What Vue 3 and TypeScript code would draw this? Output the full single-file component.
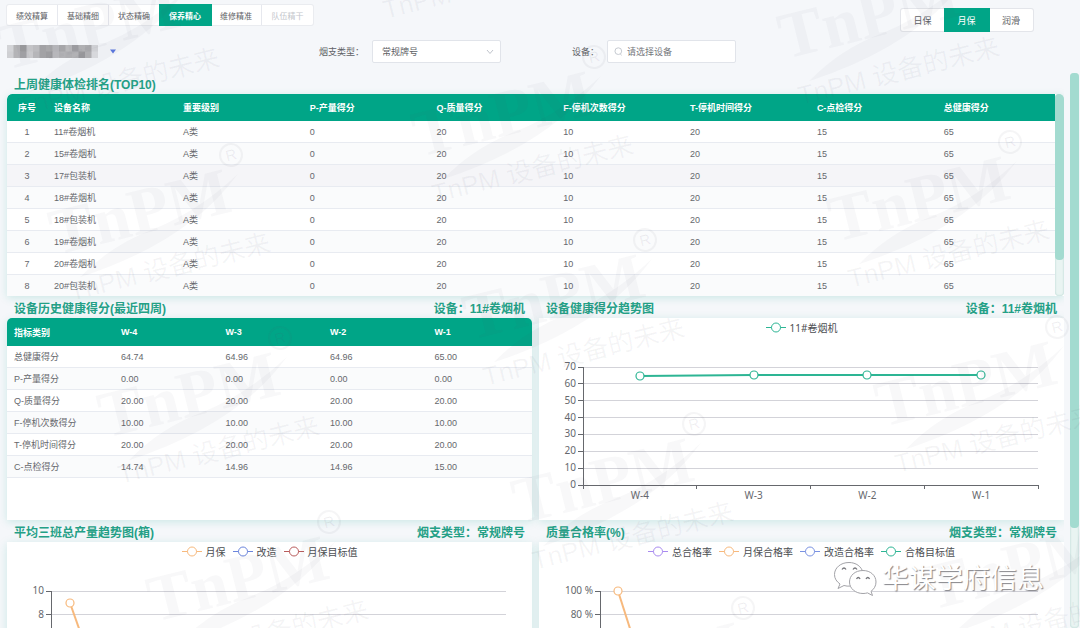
<script setup lang="ts">
import { ref } from 'vue'

interface Series { name: string; color: string }
interface Chart {
  axisX: number
  ticks: string[]
  categories: string[]
  legend: Series[]
  points: [number, number][]
  color: string
  last: number
}

const modules = ['绩效精算', '基础精细', '状态精确', '保养精心', '维修精准', '队伍精干']
const activeModule = ref('保养精心')
const periods = ['日保', '月保', '润滑']
const activePeriod = ref('月保')
const brand = ref('常规牌号')
const device = ref('')

const rankHead = ['序号', '设备名称', '重要级别', 'P-产量得分', 'Q-质量得分', 'F-停机次数得分', 'T-停机时间得分', 'C-点检得分', '总健康得分']
const rankNames = ['11#卷烟机', '15#卷烟机', '17#包装机', '18#卷烟机', '18#包装机', '19#卷烟机', '20#卷烟机', '20#包装机']
const rankRows = rankNames.map((name, i) => [String(i + 1), name, 'A类', '0', '20', '10', '20', '15', '65'])

const historyHead = ['指标类别', 'W-4', 'W-3', 'W-2', 'W-1']
const historyRows = [
  ['总健康得分', '64.74', '64.96', '64.96', '65.00'],
  ['P-产量得分', '0.00', '0.00', '0.00', '0.00'],
  ['Q-质量得分', '20.00', '20.00', '20.00', '20.00'],
  ['F-停机次数得分', '10.00', '10.00', '10.00', '10.00'],
  ['T-停机时间得分', '20.00', '20.00', '20.00', '20.00'],
  ['C-点检得分', '14.74', '14.96', '14.96', '15.00'],
]

const TOP = 49
const BOTTOM = 167
const RIGHT = 499

const health: Chart = {
  axisX: 44,
  ticks: ['70', '60', '50', '40', '30', '20', '10', '0'],
  categories: ['W-4', 'W-3', 'W-2', 'W-1'],
  legend: [{ name: '11#卷烟机', color: '#2db594' }],
  points: [[101, 58], [215, 57], [328, 57], [442, 57]],
  color: '#2db594',
  last: 4,
}
const output: Chart = {
  axisX: 44,
  ticks: ['10', '8', '6', '4', '2', '0'],
  categories: [],
  legend: [
    { name: '月保', color: '#f7b97d' },
    { name: '改造', color: '#6b85dc' },
    { name: '月保目标值', color: '#b95c5c' },
  ],
  points: [[63, 61], [92, 143]],
  color: '#f7b97d',
  last: 1,
}
const quality: Chart = {
  axisX: 61,
  ticks: ['100 %', '80 %', '60 %', '40 %', '20 %', '0 %'],
  categories: [],
  legend: [
    { name: '总合格率', color: '#a98bf0' },
    { name: '月保合格率', color: '#f7b97d' },
    { name: '改造合格率', color: '#7a92e2' },
    { name: '合格目标值', color: '#2db594' },
  ],
  points: [[79, 49], [110, 146]],
  color: '#f7b97d',
  last: 1,
}

const panels = [
  { title: '设备健康得分趋势图', note: '设备：11#卷烟机', chart: health },
  { title: '平均三班总产量趋势图(箱)', note: '烟支类型：常规牌号', chart: output },
  { title: '质量合格率(%)', note: '烟支类型：常规牌号', chart: quality },
]

const tickY = (c: Chart, i: number) => TOP + ((BOTTOM - TOP) * i) / (c.ticks.length - 1)
const catX = (c: Chart, i: number) => c.axisX + ((RIGHT - c.axisX) * i) / c.categories.length
const polyline = (c: Chart) => c.points.map((p) => p.join(',')).join(' ')

const mosaic = [
  ['#d3d4d7', '#b4b4b6', '#9c9c9e', '#c4c4c7', '#bcbcbf', '#a2a2a5', '#a8a8aa', '#b9b9bc', '#a6a6a9', '#b9b9bb', '#a0a0a3', '#b0b0b3', '#aaaaad', '#d5d6d9'],
  ['#cfd0d3', '#b4b4b7', '#a3a3a6', '#c9c9cc', '#b6b6b9', '#a2a2a5', '#9c9c9f', '#bcbcbf', '#b2b2b5', '#aeaeb1', '#b2b2b5', '#9a9a9d', '#b2b2b5', '#dddee1'],
]

const marks: [number, number][] = [
  [180, -30], [231, 155], [280, 338], [329, 522],
  [545, -127], [594, 57], [645, 240], [694, 424], [743, 608],
  [960, -41], [1010, 142], [1057, 327], [1106, 510],
]
</script>

<template>
  <div class="page">
    <header class="topbar">
      <nav class="modules">
        <button
          v-for="m in modules"
          :key="m"
          type="button"
          :class="{ active: m === activeModule }"
          :disabled="m === '队伍精干'"
          @click="activeModule = m"
        >{{ m }}</button>
      </nav>
      <div class="periods">
        <button
          v-for="p in periods"
          :key="p"
          type="button"
          :class="{ active: p === activePeriod }"
          @click="activePeriod = p"
        >{{ p }}</button>
      </div>
    </header>

    <form class="filters" @submit.prevent>
      <div class="site">
        <svg width="91" height="13" viewBox="0 0 91 13" aria-hidden="true">
          <template v-for="(row, r) in mosaic" :key="r">
            <rect v-for="(c, i) in row" :key="i" :x="i * 6.5" :y="r * 6.5" width="7" height="7" :fill="c" />
          </template>
        </svg>
        <svg width="8" height="5" viewBox="0 0 8 5" aria-hidden="true"><path d="M1 .5h6L4 4.5z" fill="#5b78e0" /></svg>
      </div>
      <div class="field">
        <label for="brand">烟支类型：</label>
        <div class="control">
          <select id="brand" v-model="brand">
            <option>常规牌号</option>
          </select>
          <svg class="chevron" width="8" height="6" viewBox="0 0 8 6" aria-hidden="true"><path d="M1 1l3 3.5L7 1" fill="none" stroke="#c0c4cc" /></svg>
        </div>
      </div>
      <div class="field">
        <label for="device">设备：</label>
        <div class="control search">
          <svg class="lens" width="9" height="9" viewBox="0 0 9 9" aria-hidden="true"><path d="M6.3 7.1l1.4 1.2M4.3 .8a3.3 3.3 0 1 1 0 6.7a3.3 3.3 0 1 1 0-6.7z" fill="none" stroke="#c0c4cc" stroke-width=".9" /></svg>
          <input id="device" v-model="device" type="text" placeholder="请选择设备" />
        </div>
      </div>
    </form>

    <div class="body">
      <main class="content">
        <section>
          <div class="title"><h2>上周健康体检排名(TOP10)</h2></div>
          <div class="card rank">
            <table>
              <colgroup>
                <col class="c-no" /><col class="c-name" /><col v-for="n in 6" :key="n" class="c-mid" /><col />
              </colgroup>
              <thead>
                <tr><th v-for="h in rankHead" :key="h" scope="col">{{ h }}</th></tr>
              </thead>
              <tbody>
                <tr v-for="row in rankRows" :key="row[0]">
                  <td v-for="(v, i) in row" :key="i">{{ v }}</td>
                </tr>
              </tbody>
            </table>
            <div class="bar inner"><div class="thumb"></div></div>
          </div>
        </section>

        <div class="grid">
          <section>
            <div class="title"><h2>设备历史健康得分(最近四周)</h2><span>设备：11#卷烟机</span></div>
            <div class="card history">
              <table>
                <colgroup>
                  <col class="c-metric" /><col v-for="n in 4" :key="n" />
                </colgroup>
                <thead>
                  <tr><th v-for="h in historyHead" :key="h" scope="col">{{ h }}</th></tr>
                </thead>
                <tbody>
                  <tr v-for="row in historyRows" :key="row[0]">
                    <td v-for="(v, i) in row" :key="i">{{ v }}</td>
                  </tr>
                </tbody>
              </table>
            </div>
          </section>

          <section v-for="p in panels" :key="p.title">
            <div class="title"><h2>{{ p.title }}</h2><span>{{ p.note }}</span></div>
            <div class="card">
              <ul class="legend">
                <li v-for="s in p.chart.legend" :key="s.name">
                  <svg width="20" height="12" viewBox="0 0 20 12" aria-hidden="true">
                    <path d="M0 6.5h20" :stroke="s.color" />
                    <circle cx="10" cy="6.5" r="4.5" fill="#fff" :stroke="s.color" />
                  </svg>
                  {{ s.name }}
                </li>
              </ul>
              <svg class="plot" viewBox="0 18 525 184" role="img" :aria-label="p.title">
                <g shape-rendering="crispEdges">
                  <template v-for="(t, i) in p.chart.ticks" :key="t">
                    <line v-if="i < p.chart.ticks.length - 1" :x1="p.chart.axisX" :x2="RIGHT" :y1="tickY(p.chart, i)" :y2="tickY(p.chart, i)" class="rule" />
                    <line :x1="p.chart.axisX - 5" :x2="p.chart.axisX" :y1="tickY(p.chart, i)" :y2="tickY(p.chart, i)" class="axis" />
                  </template>
                  <line :x1="p.chart.axisX" :x2="p.chart.axisX" :y1="TOP" :y2="BOTTOM + 1" class="axis" />
                  <line :x1="p.chart.axisX" :x2="RIGHT" :y1="BOTTOM" :y2="BOTTOM" class="axis" />
                  <template v-if="p.chart.categories.length">
                    <line v-for="n in p.chart.categories.length + 1" :key="n" :x1="catX(p.chart, n - 1)" :x2="catX(p.chart, n - 1)" :y1="BOTTOM" :y2="BOTTOM + 4" class="axis" />
                  </template>
                </g>
                <text v-for="(t, i) in p.chart.ticks" :key="t" :x="p.chart.axisX - 7" :y="tickY(p.chart, i) + 3" text-anchor="end">{{ t }}</text>
                <text v-for="(c, i) in p.chart.categories" :key="c" :x="catX(p.chart, i + 0.5)" :y="BOTTOM + 14" text-anchor="middle">{{ c }}</text>
                <polyline :points="polyline(p.chart)" fill="none" :stroke="p.chart.color" stroke-width="2" />
                <circle v-for="(pt, i) in p.chart.points.slice(0, p.chart.last)" :key="i" :cx="pt[0]" :cy="pt[1]" r="4" fill="#fff" :stroke="p.chart.color" stroke-width="1.2" />
              </svg>
            </div>
          </section>
        </div>
      </main>
      <div class="bar outer"><div class="thumb"></div></div>
    </div>

    <svg class="watermark" width="1080" height="628" viewBox="0 0 1080 628" aria-hidden="true">
      <g v-for="(m, i) in marks" :key="i" :transform="`translate(${m[0]} ${m[1]}) rotate(-14)`">
        <text x="-194" y="55" class="wm-logo">TnPM</text>
        <path d="M-176 82Q-62 74 2 20Q-44 46-92 53Q-138 58-176 82z" />
        <circle cx="0" cy="0" r="11" class="wm-ring" />
        <text x="0" y="5" text-anchor="middle" class="wm-r">R</text>
        <text x="-190" y="103" class="wm-sub">TnPM 设备的未来</text>
      </g>
    </svg>

    <div class="account">
      <svg width="44" height="36" viewBox="0 0 44 36" aria-hidden="true">
        <g fill="#fff" stroke="#a3a3a8" stroke-width="1" stroke-linejoin="round">
          <path d="M16 1.500C7.500 1.500 1.500 7 1.500 13.500c0 4 2 7 5.500 9.500l-2 4.500 6-3c2 .6 4 .8 6.500.6C30 24 31 16 30 11.500 28.500 5.500 23 1.500 16 1.500z" />
          <path d="M30 9.500c-8 0-13.500 5-13.500 11.500S22.500 32.500 30 32.500c1.500 0 3-.2 4.500-.6l5 2.600-1.500-4.200c3-2 5-5.500 5-9.300C43 14.500 37.500 9.500 30 9.500z" />
        </g>
        <g fill="none" stroke="#77777c" stroke-width="1.300">
          <path d="M9 8.500q2-3 4 0M20 8.500q2-3 4 0M23.500 18q1.800-3 3.600 0M33 18q1.800-3 3.600 0" />
        </g>
      </svg>
      <span>华谋学府信息</span>
    </div>
  </div>
</template>

<style>
body {
  background: #f5f7fa;
}
</style>

<style scoped>
.page {
  position: relative;
  display: flex;
  flex-direction: column;
  height: 100vh;
  overflow: hidden;
  background: #f5f7fa;
  color: #606266;
  font-family: "Liberation Sans", "Noto Sans CJK SC", sans-serif;
  font-size: 9px;
}
button,
select,
input {
  font: inherit;
  color: inherit;
  margin: 0;
}
.topbar {
  display: flex;
  justify-content: space-between;
  align-items: flex-start;
  padding: 5px 47px 0 7px;
}
.modules,
.periods {
  display: flex;
  background: #fff;
  border-radius: 2px;
}
.modules button,
.periods button {
  box-sizing: border-box;
  padding: 0;
  border: 0;
  border-right: 1px solid #e6e8ee;
  background: transparent;
}
.modules button {
  width: 51px;
  height: 20px;
  font-size: 8px;
}
.modules button:last-child,
.periods button:last-child {
  border-right: 0;
}
.modules button:disabled {
  color: #c3c6cc;
}
.modules {
  box-shadow: 0 0 0 1px #eaecf0;
}
.periods {
  margin-top: 4px;
  box-shadow: 0 0 0 1px #e3e5ea;
}
.periods button {
  width: 44px;
  height: 22px;
}
.modules .active,
.periods .active {
  border-color: #00a587;
  background: #00a587;
  color: #fff;
  box-shadow: 0 0 0 1px #00a587;
}
.modules .active {
  font-weight: 700;
}
.filters {
  display: grid;
  grid-template-columns: 312px 253px 1fr;
  align-items: center;
  padding: 9px 7px 9px;
}
.site {
  display: flex;
  align-items: center;
  gap: 11px;
}
.field {
  display: flex;
  align-items: center;
  gap: 8px;
}
.field label {
  white-space: nowrap;
}
.control {
  position: relative;
  display: flex;
  width: 129px;
}
.control select,
.control input {
  box-sizing: border-box;
  width: 100%;
  height: 23px;
  padding: 0 9px;
  border: 1px solid #e1e4ea;
  border-radius: 2px;
  background: #fff;
  appearance: none;
  outline: none;
}
.search input {
  padding-left: 19px;
}
.search input::placeholder {
  color: #75777c;
  opacity: 1;
}
.chevron {
  position: absolute;
  right: 7px;
  top: 9px;
}
.lens {
  position: absolute;
  left: 7px;
  top: 7px;
}
.body {
  display: flex;
  flex: 1;
  gap: 6px;
  min-height: 0;
  padding: 0 1px 0 7px;
}
.content {
  flex: 1;
  min-width: 0;
  overflow: hidden;
  margin-left: -7px;
  padding-left: 7px;
}
.title {
  display: flex;
  justify-content: space-between;
  align-items: center;
  height: 22px;
  padding: 0 7px;
  color: #24a086;
  font-size: 12px;
  font-weight: 700;
}
.title h2 {
  margin: 0;
  font-size: 12px;
}
.card {
  min-height: 202px;
  background: #fff;
  box-shadow: 0 2px 9px rgba(0, 165, 135, 0.17);
}
.rank {
  display: flex;
  height: 202px;
  overflow: hidden;
  border-radius: 5px 5px 0 0;
}
.rank table {
  flex: 1;
  min-width: 0;
}
table {
  width: 100%;
  table-layout: fixed;
  border-collapse: separate;
  border-spacing: 0;
  align-self: flex-start;
}
.c-no {
  width: 40px;
}
.c-name {
  width: 12.300%;
}
.c-mid {
  width: 12.100%;
}
.c-metric {
  width: 107px;
}
th,
td {
  box-sizing: border-box;
  padding: 0 7px;
  text-align: left;
  white-space: nowrap;
}
th {
  height: 27px;
  background: #00a587;
  color: #fff;
  font-weight: 700;
}
th:first-child {
  border-top-left-radius: 5px;
}
.history th {
  height: 28px;
}
.history th:last-child {
  border-top-right-radius: 5px;
}
.history {
  border-radius: 5px 5px 0 0;
}
td {
  height: 22px;
  border-bottom: 1px solid #e8ebf1;
  color: #66686d;
}
tbody tr:nth-child(even) td {
  background: #fafbfc;
}
.rank tbody tr:nth-child(3) td {
  background: #f5f5f8;
}
.rank th:first-child,
.rank td:first-child {
  text-align: center;
}
.grid {
  display: grid;
  grid-template-columns: 1fr 1fr;
  column-gap: 7px;
}
.legend {
  display: flex;
  justify-content: center;
  gap: 7px;
  height: 18px;
  margin: 0;
  padding: 0;
  list-style: none;
  color: #4c4e52;
  font-family: "Noto Sans", "Noto Sans CJK SC", sans-serif;
  font-size: 10px;
}
.legend li {
  display: flex;
  align-items: center;
  gap: 4px;
  white-space: nowrap;
}
.plot {
  display: block;
  width: 100%;
}
.plot text {
  fill: #66686d;
  font-family: "Noto Sans", "Noto Sans CJK SC", sans-serif;
  font-size: 10px;
}
.rule {
  stroke: #d3d3d9;
}
.axis {
  stroke: #66686d;
}
.bar {
  flex: none;
  border-radius: 4px;
  background: #e9f4f2;
  box-shadow: inset 0 0 2px rgba(0, 120, 100, 0.3);
}
.bar .thumb {
  border-radius: 4px;
  background: #a3dbd0;
}
.inner {
  width: 9px;
}
.inner .thumb {
  height: 82%;
}
.outer {
  width: 9px;
  margin-top: 1px;
}
.outer .thumb {
  height: 82%;
}
.watermark {
  position: absolute;
  left: 0;
  top: 0;
  fill: rgba(80, 80, 110, 0.04);
  pointer-events: none;
}
.wm-logo {
  font: 700 66px "Liberation Serif", serif;
}
.wm-sub {
  fill: rgba(80, 80, 110, 0.06);
  font-size: 26px;
}
.wm-r {
  fill: rgba(80, 80, 110, 0.09);
  font-size: 15px;
}
.wm-ring {
  fill: none;
  stroke: rgba(80, 80, 110, 0.06);
  stroke-width: 2;
}
.account {
  position: absolute;
  right: 36px;
  bottom: 29px;
  display: flex;
  align-items: center;
  gap: 5px;
  color: #fff;
  font-size: 27px;
  line-height: 40px;
  text-shadow: 1px 1px 1px #85858a;
  pointer-events: none;
}
</style>
